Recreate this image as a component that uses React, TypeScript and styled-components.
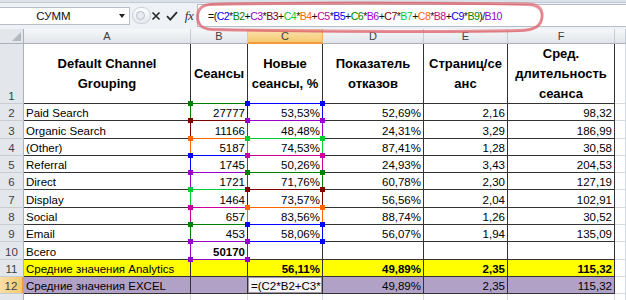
import React from 'react';
import styled, { createGlobalStyle, css } from 'styled-components';

const GlobalStyle = createGlobalStyle`
  html, body {
    margin: 0;
    padding: 0;
    background: #fff;
  }
  body {
    width: 626px;
    height: 300px;
    overflow: hidden;
    font-family: 'Liberation Sans', Arial, sans-serif;
  }
`;

// excel reference colours, in the order it hands them out
const REF = ['#0000ff', '#008000', '#9900cc', '#800000', '#00cc33', '#ff6600', '#cc0099'];

const TABLE_LINE = '#333333';
const HEAD_LINE = '#a9b1bc';

const Root = styled.div`
  position: relative;
  width: 626px;
  height: 300px;
  overflow: hidden;
`;

const Ribbon = styled.div`
  height: 3px;
  background: #dbe1e9;
  border-bottom: 1px solid #c3cad4;
  box-sizing: border-box;
`;

const Bar = styled.div`
  height: 26px;
  display: flex;
  align-items: center;
  background: #eef1f5;
  box-sizing: border-box;
  padding-bottom: 1px;
`;

const NameBox = styled.div`
  flex: 0 0 130px;
  height: 18px;
  box-sizing: border-box;
  background: #fff;
  border: 1px solid #b7bec8;
  border-left: none;
  display: flex;
  align-items: center;
  font-size: 11.5px;
  color: #111;
`;

const NameText = styled.span`
  flex: 1;
  text-align: center;
  padding-right: 12px;
`;

const DropArrow = styled.span`
  width: 0;
  height: 0;
  margin-right: 4px;
  border-left: 3.5px solid transparent;
  border-right: 3.5px solid transparent;
  border-top: 4px solid #222;
`;

const Grip = styled.div`
  flex: 0 0 19px;
  height: 17px;
  margin-left: 2px;
  border-radius: 9px;
  border: 1px solid #c9ced6;
  background: linear-gradient(#fbfcfd, #e5e9ee);
  box-sizing: border-box;
  display: flex;
  align-items: center;
  padding-left: 3px;
`;

const GripDot = styled.span`
  width: 7px;
  height: 7px;
  border-radius: 50%;
  border: 1px solid #b9bfc8;
  background: #e8ebef;
`;

const BarButton = styled.div<{ $w: number }>`
  flex: 0 0 ${(p) => p.$w}px;
  height: 18px;
  display: flex;
  align-items: center;
  justify-content: center;
`;

const FxLabel = styled.span`
  font-family: 'Liberation Serif', 'Times New Roman', serif;
  font-style: italic;
  font-size: 13px;
  color: #333;
  letter-spacing: -0.5px;
`;

const FormulaBox = styled.div`
  flex: 1;
  min-width: 0;
  overflow: hidden;
  height: 23px;
  margin-left: 2px;
  box-sizing: border-box;
  background: #fff;
  border: 1px solid #b7bec8;
  border-right: none;
  display: flex;
  align-items: center;
  padding-left: 10px;
  font-size: 10.6px;
  letter-spacing: -0.55px;
  color: #111;
  white-space: nowrap;
`;

const Tok = styled.span<{ $c?: string }>`
  color: ${(p) => p.$c || '#111'};
`;

const Scribble = styled.svg`
  position: absolute;
  left: 0;
  top: 0;
  pointer-events: none;
  z-index: 5;
`;

const Sheet = styled.div`
  display: grid;
  grid-template-columns: 24px 167px 57px 75px 101px 84px 107px 11px;
  grid-template-rows: 15px 60px repeat(11, 17.3px) 20px;
  font-size: 11.5px;
  color: #000;
`;

const Corner = styled.div`
  position: relative;
  background: #e3e7ec;
  border-right: 1px solid ${HEAD_LINE};
  border-bottom: 1px solid ${HEAD_LINE};
  &::after {
    content: '';
    position: absolute;
    right: 2px;
    bottom: 2px;
    border-left: 9px solid transparent;
    border-bottom: 9px solid #b3b9c1;
  }
`;

const ColHead = styled.div<{ $active?: boolean }>`
  box-sizing: border-box;
  display: flex;
  align-items: center;
  justify-content: center;
  font-size: 11px;
  color: #3b3f45;
  background: linear-gradient(#f6f7f9, #e1e5ea);
  border-right: 1px solid #c6ccd4;
  border-bottom: 1px solid ${HEAD_LINE};
  ${(p) =>
    p.$active &&
    css`
      background: linear-gradient(#fbe3b4, #f5c970);
      border-bottom: 2px solid #f29a3c;
      border-right-color: #e7b36a;
    `}
`;

const RowHead = styled.div<{ $active?: boolean }>`
  box-sizing: border-box;
  display: flex;
  align-items: flex-end;
  justify-content: center;
  padding-bottom: 1px;
  font-size: 11.5px;
  color: #3b3f45;
  background: #e3e7ec;
  border-right: 1px solid ${HEAD_LINE};
  border-bottom: 1px solid #c6ccd4;
  ${(p) =>
    p.$active &&
    css`
      background: linear-gradient(90deg, #f9dea8, #f3c96f);
      border-right: 2px solid #f29a3c;
    `}
`;

type Align = 'left' | 'right' | 'center';

const Cell = styled.div<{ $align?: Align; $bold?: boolean; $fill?: string; $grid?: boolean }>`
  position: relative;
  box-sizing: border-box;
  display: flex;
  align-items: flex-end;
  justify-content: ${(p) =>
    p.$align === 'right' ? 'flex-end' : p.$align === 'center' ? 'center' : 'flex-start'};
  padding: 0 2px 1px 2px;
  white-space: nowrap;
  font-weight: ${(p) => (p.$bold ? 700 : 400)};
  background: ${(p) => p.$fill || '#fff'};
  border-right: 1px solid ${(p) => (p.$grid ? '#d6dbe2' : TABLE_LINE)};
  border-bottom: 1px solid ${(p) => (p.$grid ? '#d6dbe2' : TABLE_LINE)};
`;

const HeadCell = styled.div`
  box-sizing: border-box;
  display: flex;
  flex-direction: column;
  align-items: center;
  justify-content: center;
  text-align: center;
  font-weight: 700;
  font-size: 13px;
  line-height: 20px;
  padding: 0 2px;
  background: #fff;
  border-right: 1px solid ${TABLE_LINE};
  border-bottom: 1px solid ${TABLE_LINE};
`;

const EditCell = styled(Cell)`
  background: #f4f2f7;
  box-shadow: inset 0 0 0 1px #9d9aa3;
  overflow: hidden;
  padding-left: 3px;
`;

const RefBox = styled.span<{ $c: string }>`
  position: absolute;
  top: -1px;
  left: -1px;
  right: -1px;
  bottom: -1px;
  border: 1px solid ${(p) => p.$c};
  z-index: 2;
  pointer-events: none;
`;

const Handle = styled.span<{ $c: string; $v: 'top' | 'bottom'; $h: 'left' | 'right' }>`
  position: absolute;
  width: 5px;
  height: 5px;
  background: ${(p) => p.$c};
  ${(p) => p.$v}: -3px;
  ${(p) => p.$h}: -3px;
  z-index: 3;
`;

const Ref: React.FC<{ c: string }> = ({ c }) => (
  <RefBox $c={c}>
    <Handle $c={c} $v="top" $h="left" />
    <Handle $c={c} $v="top" $h="right" />
    <Handle $c={c} $v="bottom" $h="left" />
    <Handle $c={c} $v="bottom" $h="right" />
  </RefBox>
);

const rows = [
  ['Paid Search', '27777', '53,53%', '52,69%', '2,16', '98,32'],
  ['Organic Search', '11166', '48,48%', '24,31%', '3,29', '186,99'],
  ['(Other)', '5187', '74,53%', '87,41%', '1,28', '30,58'],
  ['Referral', '1745', '50,26%', '24,93%', '3,43', '204,53'],
  ['Direct', '1721', '71,76%', '60,78%', '2,30', '127,19'],
  ['Display', '1464', '73,57%', '56,56%', '2,04', '102,91'],
  ['Social', '657', '83,56%', '88,74%', '1,26', '30,52'],
  ['Email', '453', '58,06%', '56,07%', '1,94', '135,09'],
];

// wrapped the way excel wraps them
const headers = [
  ['Default Channel', 'Grouping'],
  ['Сеансы'],
  ['Новые', 'сеансы, %'],
  ['Показатель', 'отказов'],
  ['Страниц/се', 'анс'],
  ['Сред.', 'длительность', 'сеанса'],
];

// C2*B2 ... C9*B9, then B10
const formula = () => {
  const out: React.ReactNode[] = [<Tok key="open">=(</Tok>];
  let k = 0;
  for (let r = 2; r <= 9; r++) {
    out.push(<Tok key={`c${r}`} $c={REF[k++ % 7]}>{`C${r}`}</Tok>);
    out.push(<Tok key={`m${r}`}>*</Tok>);
    out.push(<Tok key={`b${r}`} $c={REF[k++ % 7]}>{`B${r}`}</Tok>);
    if (r < 9) out.push(<Tok key={`p${r}`}>+</Tok>);
  }
  out.push(<Tok key="close">)/</Tok>);
  out.push(<Tok key="b10" $c={REF[k % 7]}>B10</Tok>);
  return out;
};

const App: React.FC = () => {
  return (
    <Root>
      <GlobalStyle />
      <Ribbon />
      <Bar>
        <NameBox>
          <NameText>СУММ</NameText>
          <DropArrow />
        </NameBox>
        <Grip>
          <GripDot />
        </Grip>
        <BarButton $w={10}>
          <svg width="10" height="10" viewBox="0 0 10 10">
            <path d="M1.5 1.5 L8.5 8.5 M8.5 1.5 L1.5 8.5" stroke="#2b2b2b" strokeWidth="1.7" />
          </svg>
        </BarButton>
        <BarButton $w={22}>
          <svg width="12" height="10" viewBox="0 0 12 10">
            <path d="M1 5.2 L4.3 8.6 L11 1.2" stroke="#2b2b2b" strokeWidth="1.8" fill="none" />
          </svg>
        </BarButton>
        <BarButton $w={12}>
          <FxLabel>fx</FxLabel>
        </BarButton>
        <FormulaBox>{formula()}</FormulaBox>
      </Bar>

      <Scribble width="626" height="40" viewBox="0 0 626 40">
        <path
          d="M210 4.5 C300 2.5 440 3 528 4 C540 4.5 543 10 542 17 C541 26 535 30 520 30.5 C420 32 300 31.5 212 29.5 C201 29 197 24 197.5 16 C198 8 202 5 210 4.5 Z"
          fill="none"
          stroke="#e06a72"
          strokeOpacity="0.7"
          strokeWidth="3"
        />
        <path
          d="M215 3.5 C320 2 450 2.5 530 5.5 C541 7 544 14 541 22 C538 29 528 31 510 31.5 C400 32.5 290 32 208 29 C199 27 196.5 20 199 12 C201 7 206 4.5 215 3.5"
          fill="none"
          stroke="#d9505b"
          strokeOpacity="0.35"
          strokeWidth="1.5"
        />
      </Scribble>

      <Sheet>
        <Corner />
        {['A', 'B', 'C', 'D', 'E', 'F', ''].map((l, i) => (
          <ColHead key={i} $active={l === 'C'}>
            {l}
          </ColHead>
        ))}

        <RowHead>1</RowHead>
        {headers.map((h) => (
          <HeadCell key={h[0]}>
            {h.map((line) => (
              <span key={line}>{line}</span>
            ))}
          </HeadCell>
        ))}
        <Cell $grid />

        {rows.map((r, i) => {
          const n = i + 2;
          return (
            <React.Fragment key={n}>
              <RowHead>{n}</RowHead>
              <Cell>{r[0]}</Cell>
              <Cell $align="right">
                {r[1]}
                <Ref c={REF[(2 * i + 1) % 7]} />
              </Cell>
              <Cell $align="right">
                {r[2]}
                <Ref c={REF[(2 * i) % 7]} />
              </Cell>
              <Cell $align="right">{r[3]}</Cell>
              <Cell $align="right">{r[4]}</Cell>
              <Cell $align="right">{r[5]}</Cell>
              <Cell $grid />
            </React.Fragment>
          );
        })}

        <RowHead>10</RowHead>
        <Cell>Всего</Cell>
        <Cell $align="right" $bold>
          50170
          <Ref c={REF[2]} />
        </Cell>
        <Cell />
        <Cell />
        <Cell />
        <Cell />
        <Cell $grid />

        <RowHead>11</RowHead>
        <Cell $fill="#ffff00">Средние значения Analytics</Cell>
        <Cell $fill="#ffff00" />
        <Cell $fill="#ffff00" $align="right" $bold>
          56,11%
        </Cell>
        <Cell $fill="#ffff00" $align="right" $bold>
          49,89%
        </Cell>
        <Cell $fill="#ffff00" $align="right" $bold>
          2,35
        </Cell>
        <Cell $fill="#ffff00" $align="right" $bold>
          115,32
        </Cell>
        <Cell $grid />

        <RowHead $active>12</RowHead>
        <Cell $fill="#b2a1c7">Средние значения EXCEL</Cell>
        <Cell $fill="#b2a1c7" />
        <EditCell>=(C2*B2+C3*</EditCell>
        <Cell $fill="#b2a1c7" $align="right">
          49,89%
        </Cell>
        <Cell $fill="#b2a1c7" $align="right">
          2,35
        </Cell>
        <Cell $fill="#b2a1c7" $align="right">
          115,32
        </Cell>
        <Cell $grid />

        <RowHead />
        <Cell $grid />
        <Cell $grid />
        <Cell $grid />
        <Cell $grid />
        <Cell $grid />
        <Cell $grid />
        <Cell $grid />
      </Sheet>
    </Root>
  );
};

export default App;
